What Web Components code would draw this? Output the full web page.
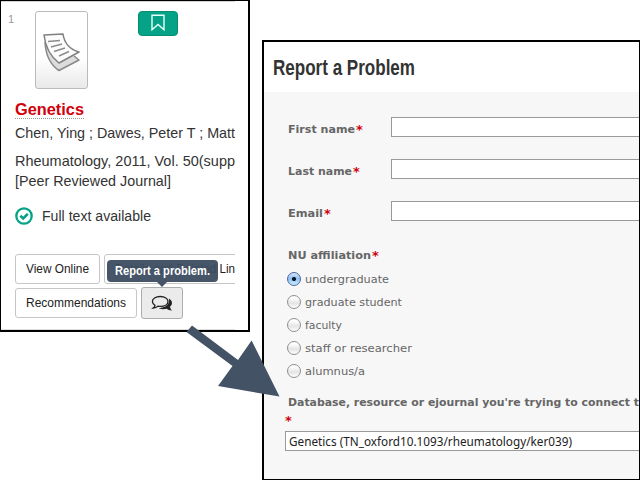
<!DOCTYPE html>
<html lang="en"><head><meta charset="utf-8"><title>Report a Problem</title>
<style>
html,body{margin:0;width:640px;height:480px;overflow:hidden;background:#fff}
demo-page{width:640px;height:480px}
</style></head><body><demo-page></demo-page>
<script>
function define(name, html, ready) {
  customElements.define(name, class extends HTMLElement {
    constructor() {
      super();
      this.attachShadow({mode: 'open'}).innerHTML = html;
    }
    connectedCallback() { if (ready) ready(this, this.shadowRoot); }
  });
}
// One line of text, set to a measured width in pixels.
define('fit-text', `<style>:host{display:block;white-space:nowrap;line-height:inherit}span{display:inline-block;transform-origin:0 50%}</style><span><slot></slot></span>`, (el, root) => {
  const s = root.querySelector('span'), w = +el.getAttribute('w');
  el.style.width = w + 'px';
  const n = s.offsetWidth && s.getBoundingClientRect().width;
  if (n) s.style.transform = `scaleX(${w / n})`;
});
define('ui-button', `<style>:host{display:flex;box-sizing:border-box;height:30px;border:1px solid #c6c6c6;border-radius:3px;background:#fff;padding-left:10px;font:13px/28px "Liberation Sans",Arial,sans-serif;color:#222;flex:none}</style><slot></slot>`);
define('doc-thumb', `<style>:host{display:block;box-sizing:border-box;width:53px;height:78px;border:1px solid #b9bcbf;border-radius:3px;background:linear-gradient(#fff 60%,#e9e9e9)}svg{display:block}</style>
<svg width="51" height="76" viewBox="36 12 51 76" fill="none" stroke-linejoin="round">
<path d="M45 42Q46 62 59 70.5L79 60L74 56" fill="#dcdcdc" stroke="#8a8a8a" stroke-width="1.5"/>
<path d="M44 35L63 34Q65 48 79 52L59 63Q46 53 44 35Z" fill="#fcfcfc" stroke="#808080" stroke-width="1.5"/>
<path d="M48 41.5L60 40.5M51 47L62 44M54 51.5L65 48M59 56L69 51.5" stroke="#8c8c8c" stroke-width="1.4"/></svg>`);
define('save-badge', `<style>:host{display:block;box-sizing:border-box;width:40px;height:25px;background:#04a387;border:1px solid #04906f;border-radius:4px}svg{display:block}</style>
<svg width="38" height="23" viewBox="0 0 38 23"><path d="M13 3.2H25V17.8L19 12.4L13 17.8Z" fill="none" stroke="#e9fffa" stroke-width="1.4"/></svg>`);
define('chat-button', `<style>:host{display:block;box-sizing:border-box;width:42px;height:32px;border:1px solid #adadad;border-radius:3px;background:#ebebeb;margin-top:-1px}svg{display:block}</style>
<svg width="40" height="30" viewBox="142 288 40 30"><path d="M168.8 298.5Q172 300.2 172 303Q172 305 170 306.8Q170.3 309 172 310.5Q168.8 310.6 166.5 308.7Q162.5 309.8 158.8 308.2Q166.8 307.5 168.6 303Q169.4 300.6 168.8 298.5Z" fill="#222"/>
<path d="M160.2 296.5C164.8 296.5 168 298.7 168 301.5S164.8 306.4 160.2 306.4Q159 306.4 158 306.2Q156 307.8 153.2 308Q154.8 306.8 155 305.3Q152.4 303.8 152.4 301.5C152.4 298.7 155.6 296.5 160.2 296.5Z" fill="#ebebeb" stroke="#222" stroke-width="1.3"/></svg>`);
define('tool-tip', `<style>:host{position:absolute;box-sizing:border-box;width:111px;height:22px;background:rgba(60,77,96,.95);border-radius:4px;color:#fff;padding-left:8px;font:bold 12px/22px "Liberation Sans",Arial,sans-serif}:host::after{content:"";position:absolute;left:50px;top:22px;border:5px solid transparent;border-top-color:#435365;border-bottom:0}</style><slot></slot>`);
define('result-card', `<style>
:host{display:block;box-sizing:border-box;width:250px;height:332px;border:solid #000;border-width:1px 2px 2px 1px;background:#fff;font:15px/20px "Liberation Sans",Arial,sans-serif;color:#333}
main{width:234px;height:329px;padding-left:14px;overflow:hidden;box-sizing:border-box;display:flex;flex-direction:column;align-items:flex-start;box-shadow:inset 0 1px #d5d5d5,inset 0 -1px #ddd}
.top{display:flex;height:99px;width:220px;box-sizing:border-box;padding-top:10px;flex:none}
.n{font-size:11px;line-height:16px;color:#999;width:20px;margin:0 0 0 -7px;flex:none}doc-thumb{margin-left:7px;flex:none}save-badge{margin-left:50px;flex:none}
.title{font-weight:bold;font-size:16.5px;color:#d1000b;line-height:18px;height:18px;border-bottom:1px dotted #999}
.a{margin-top:4px}.b{margin-top:8px}
.full{display:flex;margin-top:16px;height:18px;align-items:center;gap:9px}.full svg{display:block}.full fit-text{font-size:14px;line-height:18px}
.row{display:flex;gap:4px;height:30px}.r1{margin-top:29px}.r2{margin-top:4px}</style>
<main><div class="top"><div class="n">1</div><doc-thumb></doc-thumb><save-badge></save-badge></div>
<fit-text class="title" w="69">Genetics</fit-text>
<fit-text class="a" w="220">Chen, Ying ; Dawes, Peter T ; Matt</fit-text>
<fit-text class="b" w="220">Rheumatology, 2011, Vol. 50(supp</fit-text>
<fit-text w="156">[Peer Reviewed Journal]</fit-text>
<div class="full"><svg width="18" height="18" viewBox="0 0 18 18" fill="none" stroke="#04a387"><circle cx="9" cy="9" r="7.7" stroke-width="2.3"/><path d="M5.3 8.8L8.2 11.5L12.8 6.8" stroke-width="2.6"/></svg><fit-text w="109">Full text available</fit-text></div>
<div class="row r1"><ui-button style="width:85px"><fit-text w="63">View Online</fit-text></ui-button><ui-button style="width:160px"><fit-text w="120">Details and Related Lin</fit-text></ui-button></div>
<div class="row r2"><ui-button style="width:122px"><fit-text w="100">Recommendations</fit-text></ui-button><chat-button></chat-button></div></main>`);
define('text-field', `<style>:host{display:block;box-sizing:border-box;height:20px;border:1px solid #999;border-right:0;background:#fff;color:#222;font:12px/20px "Noto Sans","DejaVu Sans",sans-serif;padding-left:3px}</style><slot></slot>`);
define('field-label', `<style>:host{display:flex;font:bold 11px/20px "DejaVu Sans",Verdana,sans-serif;color:#666}b{color:#d1000b;font-size:13px;margin-left:1px;line-height:20px}</style><slot></slot><b>*</b>`);
define('radio-item', `<style>:host{display:flex;align-items:center;height:23px;gap:4px;font:11px/20px "DejaVu Sans",Verdana,sans-serif;color:#666}i{display:block;box-sizing:border-box;width:14px;height:14px;border:1px solid #8f8f8f;border-radius:50%;background:linear-gradient(#fff 15%,#e4e4e4 60%,#fff)}
:host([checked]) i{border-color:#5061a0;background:radial-gradient(circle,#10182c 0 1.7px,transparent 2.4px),linear-gradient(#d5e8fb 0,#8fbff0 48%,#c9f0ff)}slot{display:block;margin-top:3px}</style><i></i><slot></slot>`);
define('problem-form', `<style>
:host{display:flex;flex-direction:column;box-sizing:border-box;width:378px;height:440px;border:solid #000;border-width:2px 1px 1px 2px;background:#f7f7f7;overflow:hidden}
h1{box-sizing:border-box;margin:0;height:50px;background:#fff;padding:10px 0 0 9px;color:#333;font:bold 22px/32px "Liberation Sans Narrow","Liberation Sans",sans-serif;flex:none}
.fields{padding-top:25px;flex:none}.f{display:grid;grid-template-columns:103px 1fr;padding-left:24px;height:42px}field-label{margin-top:3px}
.q{padding-left:24px;margin-top:3px;height:21px;flex:none}radio-item{margin-left:23px;flex:none}
.db{width:351px;margin:11px 0 0 24px;font:bold 11px/20px "DejaVu Sans",sans-serif;color:#666;flex:none}.star{font:bold 13px/16px "DejaVu Sans",sans-serif;color:#d1000b;margin:0 0 0 21px;height:18px;flex:none}
.last{margin:0 0 0 21px;flex:none}
</style><h1><fit-text w="142">Report a Problem</fit-text></h1>
<div class="fields"><div class="f"><field-label><fit-text w="67">First name</fit-text></field-label><text-field></text-field></div>
<div class="f"><field-label><fit-text w="64">Last name</fit-text></field-label><text-field></text-field></div>
<div class="f"><field-label><fit-text w="35">Email</fit-text></field-label><text-field></text-field></div></div>
<field-label class="q"><fit-text w="83">NU affiliation</fit-text></field-label>
<radio-item checked><fit-text w="84">undergraduate</fit-text></radio-item>
<radio-item><fit-text w="97">graduate student</fit-text></radio-item>
<radio-item><fit-text w="37">faculty</fit-text></radio-item>
<radio-item><fit-text w="107">staff or researcher</fit-text></radio-item>
<radio-item><fit-text w="60">alumnus/a</fit-text></radio-item>
<fit-text class="db" w="351">Database, resource or ejournal you're trying to connect t</fit-text>
<div class="star">*</div>
<text-field class="last"><fit-text w="283">Genetics (TN_oxford10.1093/rheumatology/ker039)</fit-text></text-field>`);
define('demo-page', `<style>:host{display:grid;grid-template-columns:262px 378px;position:relative;align-items:start}problem-form{margin-top:40px}svg{position:absolute;left:180px;top:310px}tool-tip{left:107px;top:260px}</style>
<result-card></result-card><problem-form></problem-form><tool-tip><fit-text w="95">Report a problem.</fit-text></tool-tip>
<svg width="110" height="95" viewBox="180 310 110 95"><path d="M192 325.5L238 360L251.6 340.5L279.5 396.5L218 386L232.5 366L186.5 332Z" fill="#435365"/></svg>`);
</script></body></html>
